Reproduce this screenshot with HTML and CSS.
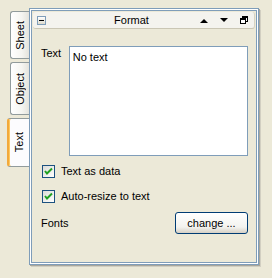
FILE: index.html
```html
<!DOCTYPE html>
<html lang="en">
<head>
    <meta charset="UTF-8">
    <title>Format</title>
    <link rel="stylesheet" href="styles.css">
</head>
<body>
    <div class="dock">
        <div class="tabs">
            <div class="tab tab-sheet"><span>Sheet</span></div>
            <div class="tab tab-object"><span>Object</span></div>
            <div class="tab tab-text active"><span>Text</span></div>
        </div>

        <div class="frame">
            <div class="panel">
                <div class="titlebar">
                    <span class="collapse"></span>
                    <span class="title">Format</span>
                    <span class="tools">
                        <svg width="8" height="5" viewBox="0 0 8 5"><path d="M0 5 L4 1 L8 5 Z" fill="#000"/></svg>
                        <svg width="8" height="5" viewBox="0 0 8 5"><path d="M0 0 L8 0 L4 4 Z" fill="#000"/></svg>
                        <svg width="8" height="8" viewBox="0 0 8 8">
                            <rect x="2.5" y="0.5" width="5" height="5" fill="none" stroke="#000"/>
                            <rect x="2" y="0" width="6" height="2" fill="#000"/>
                            <rect x="0.5" y="2.5" width="5" height="5" fill="#fff" stroke="#000"/>
                            <rect x="0" y="2" width="6" height="2" fill="#000"/>
                        </svg>
                    </span>
                </div>

                <div class="content">
                    <div class="text-row">
                        <label for="textValue">Text</label>
                        <div class="textbox" id="textValue">No text</div>
                    </div>

                    <label class="check">
                        <span class="box"><svg width="11" height="11" viewBox="0 0 11 11"><path d="M2 5 L4 7.5 L9 2.5" fill="none" stroke="#21a121" stroke-width="2"/></svg></span>
                        Text as data
                    </label>

                    <label class="check">
                        <span class="box"><svg width="11" height="11" viewBox="0 0 11 11"><path d="M2 5 L4 7.5 L9 2.5" fill="none" stroke="#21a121" stroke-width="2"/></svg></span>
                        Auto-resize to text
                    </label>

                    <div class="fonts-row">
                        <span>Fonts</span>
                        <button type="button">change ...</button>
                    </div>
                </div>
            </div>
        </div>
    </div>
</body>
</html>
```

FILE: styles.css
```css
body {
    margin: 0;
    padding: 0;
    background-color: #ece9d8;
    font-family: Tahoma, "Liberation Sans", Arial, sans-serif;
    font-size: 11px;
    line-height: 13px;
    color: #000;
}
.dock {
    display: flex;
    align-items: flex-start;
    width: 272px;
    height: 278px;
}
.tabs {
    display: flex;
    flex-direction: column;
    align-items: flex-end;
    width: 29px;
    padding-top: 11px;
    gap: 3px;
}
.tab {
    width: 18px;
    display: flex;
    align-items: center;
    justify-content: center;
    border: 1px solid #919b9c;
    border-right: none;
    border-radius: 3px 0 0 3px;
    background: linear-gradient(to right, #ffffff, #f5f5f1 60%, #e4e3dc);
}
.tab span {
    writing-mode: vertical-rl;
    transform: rotate(180deg);
}
.tab-sheet {
    height: 46px;
}
.tab-object {
    height: 51px;
}
.tab-text {
    height: 47px;
}
.tab.active {
    width: 20px;
    background: #fcfcfe;
    border-left: 2px solid #f2a93b;
    box-shadow: inset 1px 0 0 #ffc85e;
}
.frame {
    margin-top: 8px;
    width: 226px;
    height: 253px;
    border: 1px solid #7f9db9;
    background-color: #fff;
    padding: 1px;
    box-shadow: 1px 1px 0 #a8a69c, 2px 2px 0 #d2cfc2;
}
.panel {
    height: calc(100% - 2px);
    border: 1px solid #7f9db9;
    background-color: #ece9d8;
}
.titlebar {
    display: flex;
    align-items: center;
    height: 16px;
    margin: 1px 1px 0 1px;
    padding: 0 6px 0 4px;
    background-color: #f4f3ee;
    border-bottom: 1px solid #cac6b4;
    border-right: 1px solid #d6d3c4;
    border-radius: 3px;
}
.collapse {
    position: relative;
    width: 7px;
    height: 7px;
    border: 1px solid #7f9db9;
    background: linear-gradient(#ffffff, #dcd9cc);
}
.collapse::after {
    content: "";
    position: absolute;
    left: 1px;
    top: 3px;
    width: 5px;
    height: 1px;
    background-color: #000;
}
.title {
    flex: 1;
    text-align: center;
    padding-left: 17px;
}
.tools {
    display: flex;
    align-items: center;
    gap: 12px;
}
.tools svg {
    display: block;
}
.content {
    display: flex;
    flex-direction: column;
    padding: 17px 8px 0 9px;
}
.text-row {
    display: flex;
    margin-bottom: 9px;
}
.text-row label {
    width: 28px;
    padding-top: 1px;
}
.textbox {
    width: 173px;
    height: 103px;
    padding: 4px 3px 1px 3px;
    border: 1px solid #7f9db9;
    background-color: #fff;
}
.check {
    display: flex;
    align-items: center;
    gap: 6px;
    height: 13px;
    margin-bottom: 12px;
    padding-left: 1px;
}
.check .box {
    width: 11px;
    height: 11px;
    border: 1px solid #1c5180;
    background: linear-gradient(135deg, #dcdcd7, #ffffff);
}
.check .box svg {
    display: block;
}
.check:last-of-type {
    margin-bottom: 9px;
}
.fonts-row {
    display: flex;
    align-items: center;
    justify-content: space-between;
}
.fonts-row button {
    width: 73px;
    height: 22px;
    padding: 0;
    font-family: inherit;
    font-size: 11px;
    color: #000;
    border: 1px solid #003c74;
    border-radius: 3px;
    background: linear-gradient(#ffffff, #f3f3ef 70%, #d6d0c5);
}
```
